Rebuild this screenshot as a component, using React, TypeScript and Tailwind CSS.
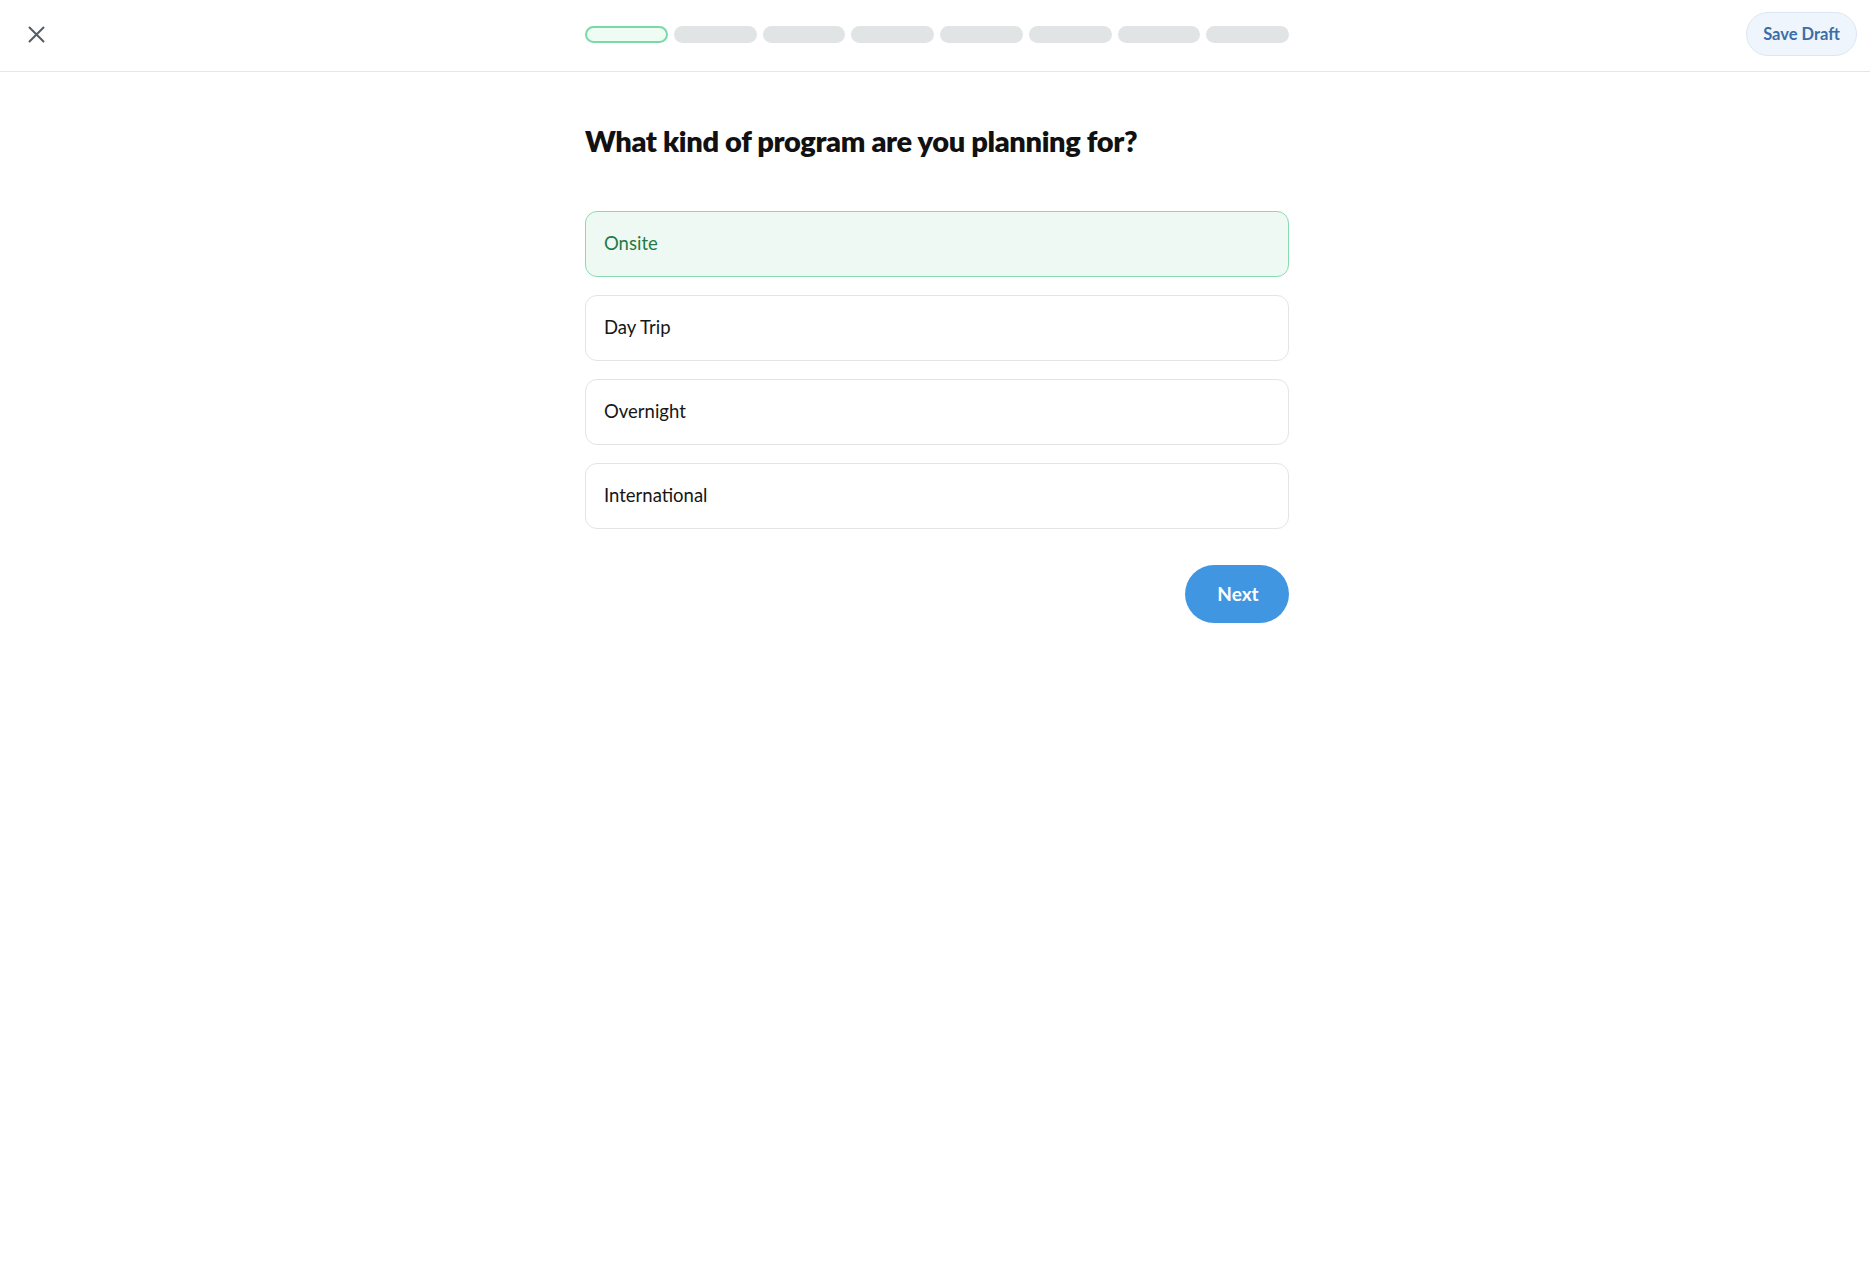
import React from "react";

const options = ["Onsite", "Day Trip", "Overnight", "International"];

export default function App() {
  const selected = 0;
  return (
    <div className="min-h-screen bg-white" style={{ fontFamily: "Lato, 'Noto Sans', sans-serif" }}>
      <header className="h-[72px] border-b border-[#e4e6e8] flex items-center relative">
        <button className="absolute left-[25px] top-[23px] w-[22px] h-[22px] flex items-center justify-center text-[#545c64]">
          <svg width="17" height="17" viewBox="0 0 17 17" fill="none" stroke="currentColor" strokeWidth="2" strokeLinecap="round">
            <path d="M1.5 1.5 L15.5 15.5 M15.5 1.5 L1.5 15.5" />
          </svg>
        </button>
        <div className="w-[708px] mx-auto pl-[4px] flex gap-[6px] -mt-[3px]">
          {Array.from({ length: 8 }).map((_, i) =>
            i === 0 ? (
              <div key={i} className="h-[17px] w-[83px] rounded-full border-2 border-[#7ad8a9] bg-[#effcf4]" />
            ) : (
              <div key={i} className="h-[17px] w-[83px] rounded-full bg-[#e1e4e5]" />
            )
          )}
        </div>
        <button className="absolute right-[13px] top-[12px] h-[44px] w-[111px] rounded-full bg-[#eef5fc] border border-[#dce7f3] text-[#3a6ea8] text-[16.5px] font-bold">
          Save Draft
        </button>
      </header>
      <main className="w-[708px] mx-auto pl-[4px]">
        <h1 className="mt-[51px] text-[29px] leading-[36px] font-extrabold text-[#111111] tracking-[-0.35px]">
          What kind of program are you planning for?
        </h1>
        <div className="mt-[52px] flex flex-col gap-[18px]">
          {options.map((o, i) =>
            i === selected ? (
              <div
                key={o}
                className="h-[66px] rounded-[12px] border border-[#86dbb0] bg-[#eff9f3] flex items-center px-[18px] text-[18.5px] text-[#1f7a47]"
              >
                {o}
              </div>
            ) : (
              <div
                key={o}
                className="h-[66px] rounded-[12px] border border-[#e2e4e6] bg-white flex items-center px-[18px] text-[18.5px] text-[#161616]"
              >
                {o}
              </div>
            )
          )}
        </div>
        <div className="mt-[36px] flex justify-end">
          <button className="h-[58px] w-[104px] rounded-full bg-[#4196e1] text-white text-[19px] font-bold pl-[2px]">
            Next
          </button>
        </div>
      </main>
    </div>
  );
}
